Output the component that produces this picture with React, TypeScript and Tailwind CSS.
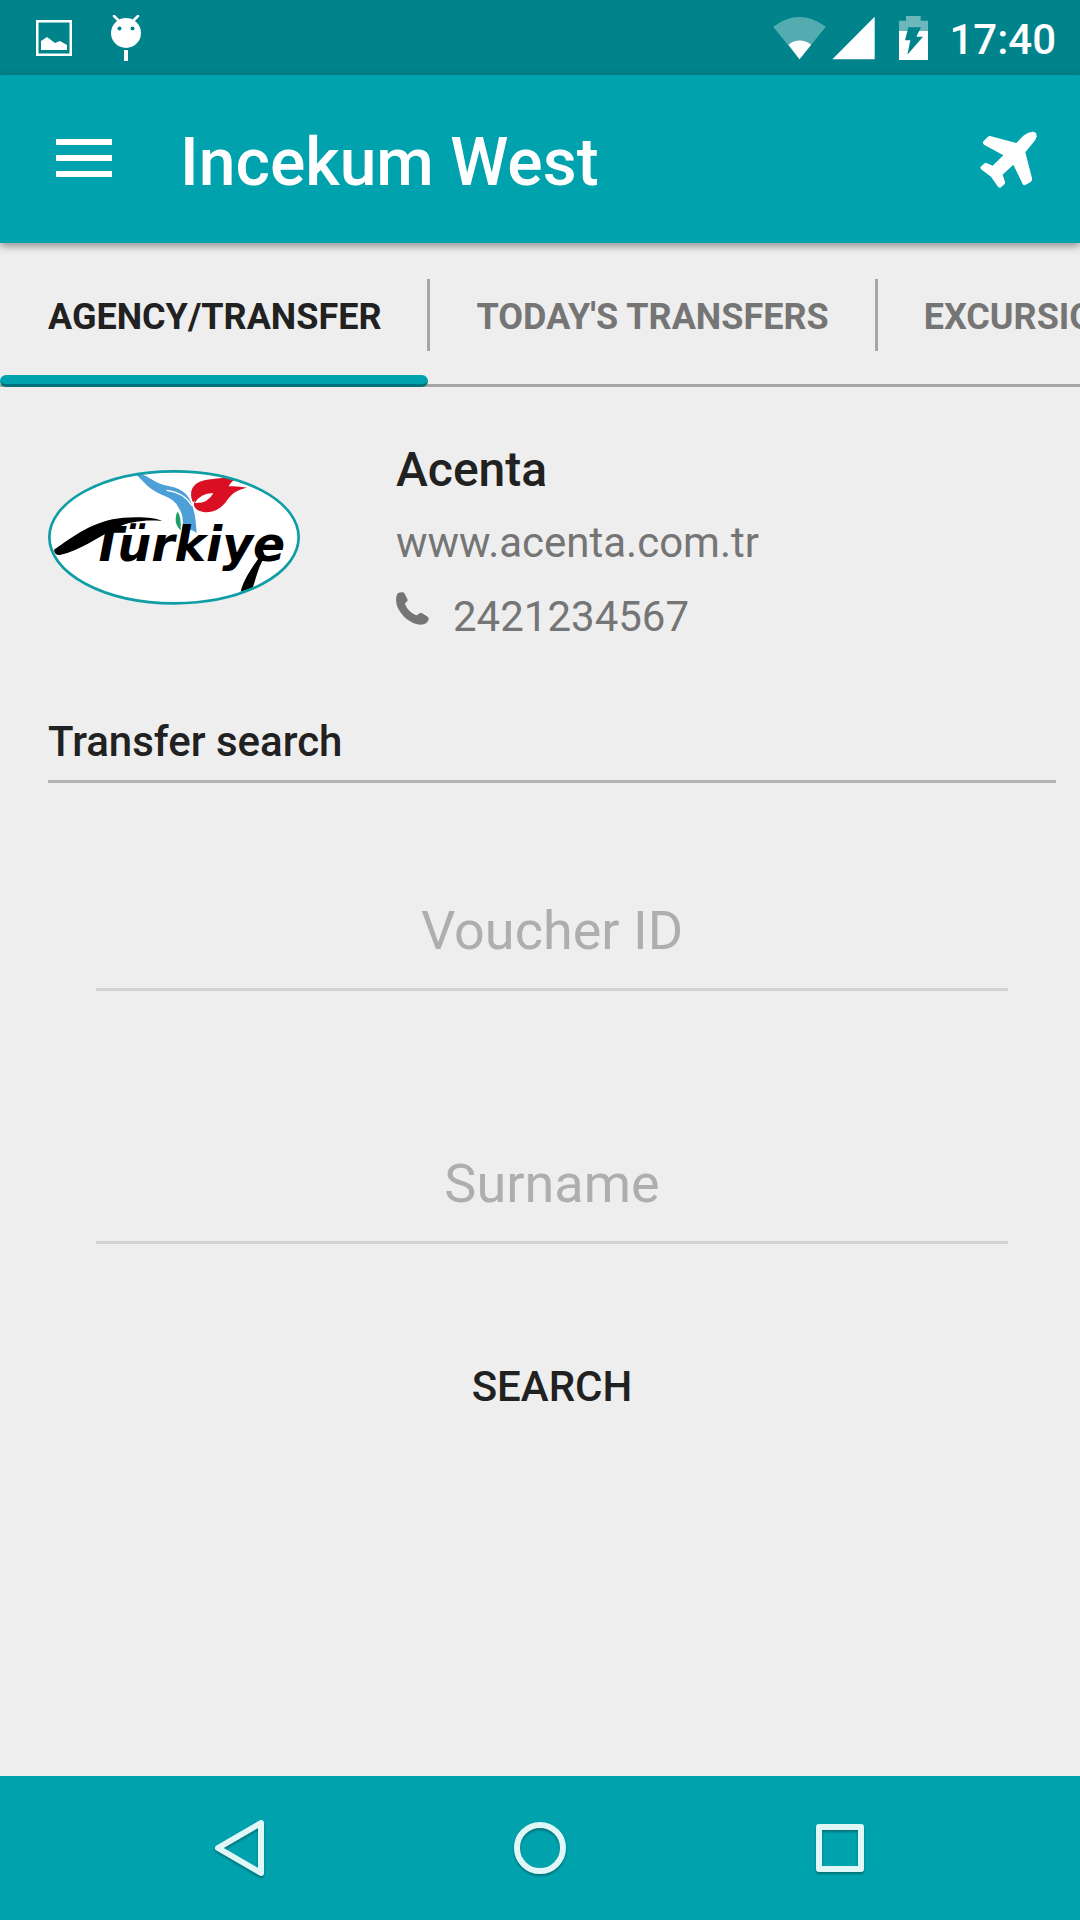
import React, { useState } from 'react'

const tabs = ['AGENCY/TRANSFER', "TODAY'S TRANSFERS", 'EXCURSIONS']

const StatusBar = () => (
    <div className="flex h-[75px] items-center justify-between bg-[#00838b] pr-6 pl-9 text-white">
        <div className="flex items-center gap-[39px]">
            <svg className="h-9 w-9" viewBox="0 0 36 36" fill="none">
                <path
                    d="M1.25 1.25h33.5v33.5H1.25z"
                    stroke="currentColor"
                    strokeWidth="2.5"
                />
                <path
                    d="M5 21l6-4 8 6 5-2 7 4v5H5z"
                    fill="currentColor"
                />
            </svg>
            <svg className="h-[46px] w-[30px]" viewBox="0 0 30 46">
                <path
                    d="M3 1l5 5M27 1l-5 5"
                    stroke="currentColor"
                    strokeWidth="2.5"
                    strokeLinecap="round"
                />
                <circle cx="15" cy="18" r="15" fill="currentColor" />
                <circle cx="8.5" cy="13.5" r="2" fill="#00838b" />
                <circle cx="21.5" cy="13.5" r="2" fill="#00838b" />
                <path d="M13 35h4v11h-4z" fill="currentColor" />
            </svg>
        </div>
        <div className="flex items-center">
            <svg
                className="mr-1.5 h-11 w-[53px]"
                viewBox="0 0 158 132"
                fill="currentColor"
            >
                <path d="M0 32Q79-26 158 32L79 130z" opacity=".33" />
                <path d="M46 86Q79 61 114 86L79 130z" />
            </svg>
            <svg
                className="mr-6 h-11 w-[43px]"
                viewBox="0 0 129 132"
                fill="currentColor"
            >
                <path d="M1 130L128 2v128z" />
            </svg>
            <svg
                className="mr-[21px] h-11 w-[29px]"
                viewBox="0 0 87 132"
                fill="currentColor"
            >
                <path d="M0 45V14h21V0h44v14h22v31z" opacity=".42" />
                <path d="M0 45h87v87H0z" />
                <path
                    d="M28 34h38L52 62h20L25 116l9-43H18z"
                    fill="#00838b"
                />
            </svg>
            <span className="pt-1 text-[42px] leading-[48px] font-medium">
                17:40
            </span>
        </div>
    </div>
)

const AppBar = () => (
    <header className="relative flex h-[168px] items-center bg-[#00a2ad] pr-[42px] pl-14 text-white shadow-[0_3px_8px_rgba(0,0,0,0.4)]">
        <button type="button" aria-label="Menu">
            <svg
                className="block h-10 w-14"
                viewBox="0 0 56 40"
                fill="currentColor"
            >
                <path d="M0 0h56v6H0zM0 16h56v6H0zM0 32h56v6H0z" />
            </svg>
        </button>
        <h1 className="ml-[68px] flex-1 pt-2 text-[66px] leading-[78px] font-medium">
            Incekum West
        </h1>
        <button type="button" aria-label="Flights">
            <svg
                className="block h-[58px] w-[58px]"
                viewBox="719 390 174 174"
                fill="currentColor"
            >
                <path d="M889 410Q890 395 876 395Q862 396 848 408L828 429L752 409Q746 407 742 411L728 425Q726 430 731 434L789 466L757 497L740 490Q734 488 731 491L721 500Q719 506 724 509L752 530L773 560Q778 566 783 561L793 552Q795 548 794 545L787 524L819 494L847 552Q850 557 855 555L872 545Q876 541 875 535L855 457L877 430Q886 420 889 410z" />
            </svg>
        </button>
    </header>
)

const AgencyLogo = () => (
    <svg
        className="mt-9 h-[135px] w-[252px] shrink-0"
        viewBox="54 59 756 405"
        role="img"
        aria-label="Türkiye"
    >
        <defs>
            <clipPath id="logo-oval">
                <ellipse cx="432" cy="261" rx="372" ry="197" />
            </clipPath>
        </defs>
        <ellipse cx="432" cy="261" rx="374" ry="199" fill="#fff" />
        <g clipPath="url(#logo-oval)">
            <path
                d="M314 70C350 68 362 92 402 104C450 112 476 128 486 164C496 190 498 220 500 248Q478 232 456 238C462 212 458 190 446 172C428 138 396 138 370 120C346 104 334 84 314 70z"
                fill="#4d9fd8"
            />
            <path
                d="M410 120Q462 126 486 166"
                fill="none"
                stroke="#fff"
                strokeWidth="4"
            />
            <path
                d="M443 184Q454 196 452 240Q436 226 437 206Q438 190 443 184z"
                fill="#1f9d6b"
            />
            <path
                d="M489 156C472 118 492 88 550 86C584 80 600 84 622 84Q604 92 596 108Q620 106 652 112C622 118 610 126 594 146C574 178 546 188 520 185C496 180 486 168 495 150z"
                fill="#d90f23"
            />
            <path d="M494 158Q510 130 550 128Q534 160 494 158z" fill="#fff" />
            {/* brush strokes around the wordmark */}
            <path d="M72 298C130 258 190 210 280 202C330 198 382 202 396 212C350 208 300 212 262 232C200 262 150 300 90 314Q74 316 72 298z" />
            <path d="M690 300Q706 302 702 324C684 352 680 380 668 412L632 424C642 384 664 356 684 326z" />
            <text
                x="184"
                y="332"
                className="font-['DejaVu_Sans',sans-serif] text-[142px] font-bold italic"
            >
                Türkiye
            </text>
        </g>
        <ellipse
            cx="432"
            cy="261"
            rx="374"
            ry="198"
            fill="none"
            stroke="#0f9ea5"
            strokeWidth="8"
        />
    </svg>
)

const App = () => {
    const [activeTab, setActiveTab] = useState(tabs[0])
    const [voucherId, setVoucherId] = useState('')
    const [surname, setSurname] = useState('')

    const handleSubmit = (event: React.FormEvent) => {
        event.preventDefault()
    }

    return (
        <div className="flex min-h-screen flex-col bg-[#eeeeee] font-['Roboto','Liberation_Sans',sans-serif] text-[#212121]">
            <StatusBar />
            <AppBar />
            <nav className="flex h-36 overflow-hidden">
                {tabs.map((tab, index) => (
                    <button
                        key={tab}
                        type="button"
                        onClick={() => setActiveTab(tab)}
                        className={`relative flex shrink-0 items-center border-b-3 border-[#a6a6a6] pt-1.5 text-4xl font-bold whitespace-nowrap ${
                            tab === activeTab
                                ? 'text-[#212121]'
                                : 'text-[#757575]'
                        }`}
                    >
                        <span className="pr-[47px] pl-12">{tab}</span>
                        {index < tabs.length - 1 && (
                            <span className="absolute top-9 -right-0.5 h-[72px] w-[3px] bg-[#a6a6a6]" />
                        )}
                        {tab === activeTab && (
                            <span className="absolute inset-x-0 -bottom-[3px] h-3 overflow-hidden rounded-full border-b-3 border-[#00727a] bg-[#00a2ad]" />
                        )}
                    </button>
                ))}
            </nav>
            <main className="flex-1 pt-[47px] pr-6 pl-12">
                <section className="flex gap-24">
                    <AgencyLogo />
                    <div className="text-[42px] leading-[74px] text-[#757575]">
                        <h2 className="text-5xl leading-[72px] font-medium text-[#212121]">
                            Acenta
                        </h2>
                        <a href="#website" className="block">
                            www.acenta.com.tr
                        </a>
                        <a href="tel:2421234567" className="flex gap-6">
                            <svg
                                className="mt-3 h-[33px] w-[33px]"
                                viewBox="48 483 100 100"
                                fill="currentColor"
                            >
                                <path d="M52 488Q60 482 70 484Q74 486 76 491L83 506Q84 510 80 513Q74 515 76 521Q84 541 104 551Q112 556 117 549Q121 545 126 547L143 557Q148 560 147 566Q144 576 132 581Q118 584 100 577Q68 562 53 530Q44 506 52 488z" />
                            </svg>
                            2421234567
                        </a>
                    </div>
                </section>
                <form onSubmit={handleSubmit} className="mt-16">
                    <h2 className="border-b-3 border-[#b2b2b2] pb-3.5 text-[42px] leading-[48px] font-medium">
                        Transfer search
                    </h2>
                    <div className="flex flex-col px-12">
                        <input
                            type="text"
                            aria-label="Voucher ID"
                            placeholder="Voucher ID"
                            value={voucherId}
                            onChange={(e) => setVoucherId(e.target.value)}
                            className="mt-[90px] h-[118px] border-b-3 border-[#d1d1d1] text-center text-[54px] outline-none placeholder:text-[#aeaeae]"
                        />
                        <input
                            type="text"
                            aria-label="Surname"
                            placeholder="Surname"
                            value={surname}
                            onChange={(e) => setSurname(e.target.value)}
                            className="mt-[135px] h-[118px] border-b-3 border-[#d1d1d1] text-center text-[54px] outline-none placeholder:text-[#aeaeae]"
                        />
                        <button
                            type="submit"
                            className="mt-[70px] h-36 text-[42px] font-medium"
                        >
                            SEARCH
                        </button>
                    </div>
                </form>
            </main>
            <footer className="flex h-36 items-center justify-center bg-[#00a2ad] px-[90px] text-[#e0f7f8]">
                <button
                    type="button"
                    aria-label="Back"
                    className="flex flex-1 justify-center"
                >
                    <svg
                        className="h-[60px] w-[60px] drop-shadow-[0_2px_1px_rgba(0,0,0,0.3)]"
                        viewBox="0 0 60 60"
                        fill="none"
                        stroke="currentColor"
                        strokeWidth="6"
                        strokeLinejoin="round"
                    >
                        <path d="M51 5v50L8 30z" />
                    </svg>
                </button>
                <button
                    type="button"
                    aria-label="Home"
                    className="flex flex-1 justify-center"
                >
                    <svg
                        className="h-[60px] w-[60px] drop-shadow-[0_2px_1px_rgba(0,0,0,0.3)]"
                        viewBox="0 0 60 60"
                        fill="none"
                        stroke="currentColor"
                        strokeWidth="6"
                    >
                        <circle cx="30" cy="30" r="23" />
                    </svg>
                </button>
                <button
                    type="button"
                    aria-label="Recent apps"
                    className="flex flex-1 justify-center"
                >
                    <svg
                        className="h-[60px] w-[60px] drop-shadow-[0_2px_1px_rgba(0,0,0,0.3)]"
                        viewBox="0 0 60 60"
                        fill="none"
                        stroke="currentColor"
                        strokeWidth="6"
                        strokeLinejoin="round"
                    >
                        <rect x="9" y="9" width="42" height="42" />
                    </svg>
                </button>
            </footer>
        </div>
    )
}

export default App
